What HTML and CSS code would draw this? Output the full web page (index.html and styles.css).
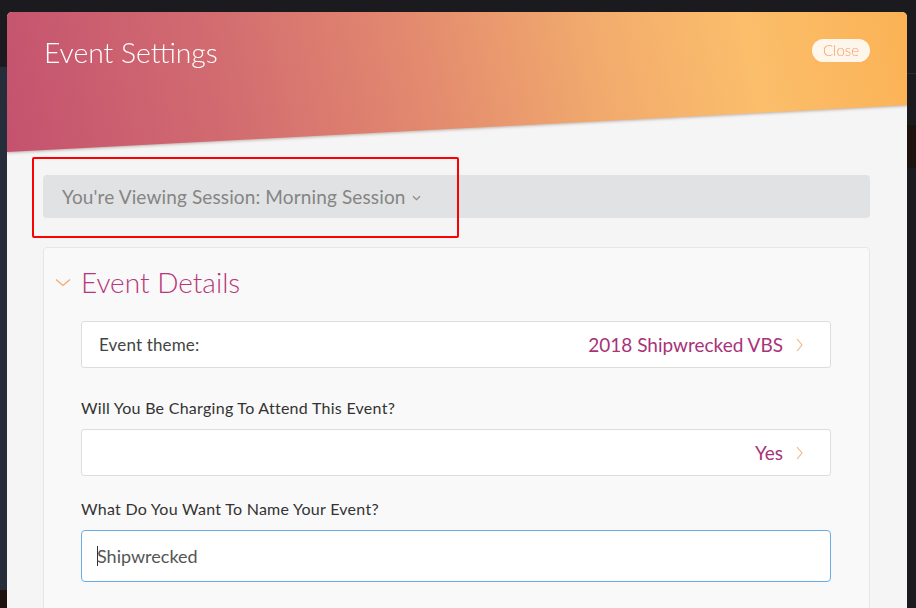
FILE: index.html
```html
<!DOCTYPE html>
<html>
<head>
<meta charset="utf-8">
<link rel="stylesheet" href="styles.css">
</head>
<body>
<div class="backdrop">
  <div class="bg-left"></div>
  <div class="bg-right-line"></div>
  <div class="bg-right-brown"></div>
  <div class="bg-left-bottom"></div>
</div>
<div class="modal">
  <div class="header-wrap">
    <div class="header">
      <h1 class="title">Event Settings</h1>
      <button class="close">Close</button>
    </div>
  </div>
  <div class="content">
    <div class="session-bar">
      <span>You're Viewing Session: Morning Session</span>
      <svg class="session-caret" width="9" height="6" viewBox="0 0 9 6"><path d="M1 1.2 L4.5 4.6 L8 1.2" fill="none" stroke="#8a8a8a" stroke-width="1.2"/></svg>
    </div>
    <div class="card">
      <div class="card-title">
        <svg class="title-caret" width="16" height="9" viewBox="0 0 16 9"><path d="M1 1.5 L8 7.5 L15 1.5" fill="none" stroke="#f5a46b" stroke-width="1.1"/></svg>
        <span>Event Details</span>
      </div>
      <div class="row">
        <span class="row-label">Event theme:</span>
        <span class="row-value">2018 Shipwrecked VBS</span>
        <svg class="row-caret" width="7" height="14" viewBox="0 0 7 14"><path d="M1 1 L6 7 L1 13" fill="none" stroke="#f7b27a" stroke-width="1.1"/></svg>
      </div>
      <div class="field-label first">Will You Be Charging To Attend This Event?</div>
      <div class="row">
        <span class="row-label"></span>
        <span class="row-value">Yes</span>
        <svg class="row-caret" width="7" height="14" viewBox="0 0 7 14"><path d="M1 1 L6 7 L1 13" fill="none" stroke="#f7b27a" stroke-width="1.1"/></svg>
      </div>
      <div class="field-label second">What Do You Want To Name Your Event?</div>
      <div class="input"><span class="caret-line"></span>Shipwrecked</div>
    </div>
  </div>
</div>
<div class="annotation"></div>
</body>
</html>
```

FILE: styles.css
```css
html, body {
  margin: 0;
  padding: 0;
}
body {
  width: 916px;
  height: 608px;
  overflow: hidden;
  background: #1b1b1f;
  font-family: Lato, "Open Sans", Arial, sans-serif;
  position: relative;
}
.backdrop {
  position: absolute;
  inset: 0;
}
.bg-left {
  position: absolute;
  left: 0;
  top: 67px;
  width: 7px;
  height: 523px;
  background: #252d3b;
}
.bg-left-bottom {
  position: absolute;
  left: 0;
  top: 590px;
  width: 7px;
  height: 18px;
  background: #1c130e;
}
.bg-right-line {
  position: absolute;
  right: 0;
  top: 73px;
  width: 9px;
  height: 1px;
  background: #2c2c31;
}
.bg-right-brown {
  position: absolute;
  right: 0;
  top: 125px;
  width: 9px;
  height: 43px;
  background: #1c130e;
}
.modal {
  position: absolute;
  left: 7px;
  top: 12px;
  width: 900px;
  height: 620px;
  background: #f5f5f5;
  border-radius: 5px 5px 0 0;
  overflow: hidden;
}
.header-wrap {
  height: 140px;
  filter: drop-shadow(0 1px 1.5px rgba(90, 40, 20, 0.35));
}
.header {
  height: 140px;
  box-sizing: border-box;
  padding: 23px 37px 0 37px;
  display: flex;
  justify-content: space-between;
  align-items: flex-start;
  background: linear-gradient(78deg, #c4526f 0%, #d26c70 25%, #e2886f 45%, #f1aa6d 65%, #fbbe6b 82%, #fbb255 100%);
  clip-path: polygon(0 0, 100% 0, 100% 93px, 0 100%);
}
.title {
  margin: 0;
  font-weight: 300;
  font-size: 28.3px;
  line-height: 34px;
  color: #ffffff;
}
.close {
  margin-top: 4px;
  width: 58px;
  height: 23px;
  border: none;
  border-radius: 12px;
  background: rgba(255, 255, 255, 0.88);
  color: #f29d6c;
  font-family: Lato, Arial, sans-serif;
  font-weight: 300;
  font-size: 15px;
  padding: 0;
  line-height: 23px;
}
.content {
  padding: 23px 37px 0 36px;
}
.session-bar {
  height: 43px;
  box-sizing: border-box;
  background: #e1e2e3;
  border-radius: 4px;
  padding-left: 19px;
  display: flex;
  align-items: center;
  gap: 6px;
  color: #858585;
  font-size: 19px;
  letter-spacing: 0.13px;
}
.session-caret {
  margin-top: 2px;
}
.card {
  margin-top: 29px;
  background: #f9f9f9;
  border: 1px solid #e6e6e6;
  border-radius: 4px;
  padding: 0 38px 40px 37px;
  height: 400px;
}
.card-title {
  position: relative;
  padding-top: 16px;
  height: 36px;
  display: flex;
  align-items: center;
  font-weight: 300;
  font-size: 28px;
  color: #b8367a;
}
.title-caret {
  position: absolute;
  left: -26px;
  top: 30px;
}
.row {
  margin-top: 21px;
  height: 47px;
  box-sizing: border-box;
  background: #ffffff;
  border: 1px solid #dcdcdc;
  border-radius: 3px;
  display: flex;
  align-items: center;
  padding: 0 27px 0 17px;
}
.row-label {
  flex: 1;
  font-size: 17px;
  letter-spacing: 0.15px;
  color: #444;
}
.row-value {
  font-size: 19px;
  color: #a83378;
  margin-right: 13px;
}
.row-caret {
  margin-top: 1px;
}
.field-label {
  font-size: 16px;
  letter-spacing: 0.27px;
  line-height: 20px;
  color: #333;
}
.field-label.first {
  margin-top: 30px;
  margin-bottom: 11px;
}
.field-label.first + .row {
  margin-top: 0;
}
.field-label.second {
  margin-top: 23px;
  margin-bottom: 11px;
}
.input {
  height: 52px;
  box-sizing: border-box;
  background: #ffffff;
  border: 1px solid #6aade4;
  border-radius: 4px;
  padding-left: 15px;
  display: flex;
  align-items: center;
  font-size: 18px;
  color: #555;
}
.caret-line {
  display: inline-block;
  width: 1px;
  height: 20px;
  background: #333;
  margin-right: -1px;
}
.annotation {
  position: absolute;
  left: 32px;
  top: 157px;
  width: 423px;
  height: 77px;
  border: 2px solid #ff0000;
  border-radius: 2px;
}
```
